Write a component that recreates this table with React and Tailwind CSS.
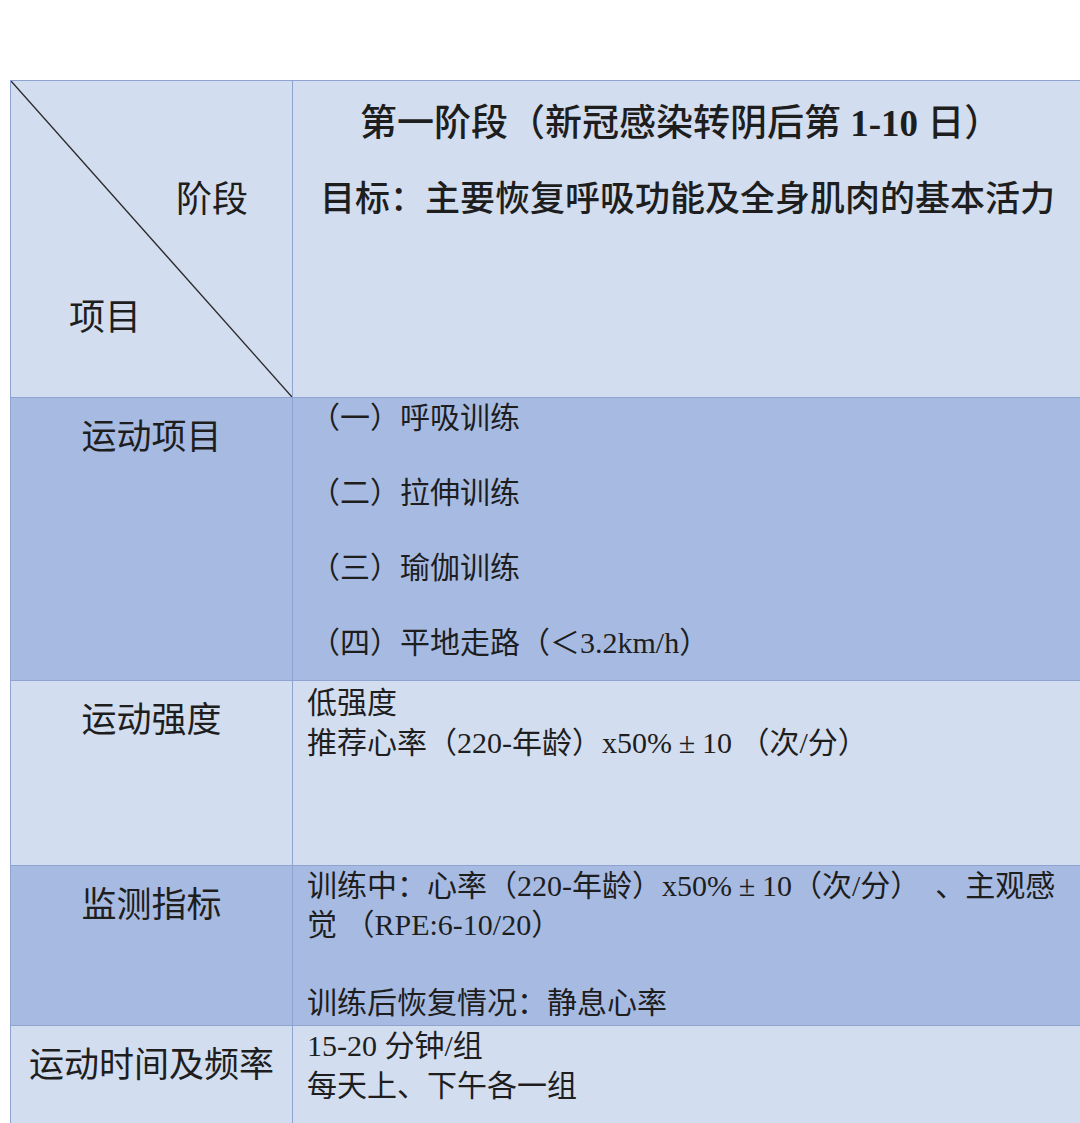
const FONT = { fontFamily: '"Liberation Serif", "Noto Sans CJK SC", serif' };

// wide ± like the CJK font in the original scan
const PM = () => <span className="inline-block w-[1em] text-center">±</span>;

const rows = [
  {
    label: "运动项目",
    dark: true,
    h: "h-[283px]",
    body: (
      <div className="pl-[17px] text-[30px] leading-[40px] flex flex-col gap-[35px]">
        <div>（一）呼吸训练</div>
        <div>（二）拉伸训练</div>
        <div>（三）瑜伽训练</div>
        <div>（四）平地走路（＜3.2km/h）</div>
      </div>
    ),
  },
  {
    label: "运动强度",
    dark: false,
    h: "h-[185px]",
    body: (
      <div className="pl-[14px] pt-[2px] text-[30px] leading-[40px] whitespace-pre">
        <div>低强度</div>
        <div>推荐心率（220-年龄）x50%<PM />10 （次/分）</div>
      </div>
    ),
  },
  {
    label: "监测指标",
    dark: true,
    h: "h-[160px]",
    body: (
      <div className="pl-[14px] text-[30px] leading-[39px] whitespace-pre">
        <div>训练中：心率（220-年龄）x50%<PM />10（次/分）  、主观感</div>
        <div>觉 （RPE:6-10/20）</div>
        <div className="h-[39px]" />
        <div>训练后恢复情况：静息心率</div>
      </div>
    ),
  },
  {
    label: "运动时间及频率",
    dark: false,
    h: "h-[120px]",
    body: (
      <div className="pl-[14px] text-[30px] leading-[40px]">
        <div>15-20 分钟/组</div>
        <div>每天上、下午各一组</div>
      </div>
    ),
  },
];

export default function App() {
  return (
    <div className="w-[1080px] h-[1123px] bg-white overflow-hidden pt-[80px] pl-[10px] text-[#1e1e1e]" style={FONT}>
      <div className="w-[1110px] border-l border-t border-[#8ea3cf]">
        {/* header */}
        <div className="flex h-[317px] bg-[#d2ddef] border-b border-[#8ea3cf]">
          <div className="relative w-[282px] shrink-0 border-r border-[#8ea3cf]">
            <svg className="absolute inset-0 w-full h-full" viewBox="0 0 100 100" preserveAspectRatio="none">
              <line x1="0" y1="0" x2="100" y2="100" stroke="#2a2a2a" strokeWidth="1.4" vectorEffect="non-scaling-stroke" />
            </svg>
            <div className="flex flex-col pt-[99px] text-[36px] leading-[40px]">
              <div className="pl-[165px]">阶段</div>
              <div className="pl-[58px] mt-[78px]">项目</div>
            </div>
          </div>
          <div className="flex-1 pt-[22px]">
            <div className="pl-[67px] text-[37px] leading-[42px] font-medium">
              第一阶段（新冠感染转阴后第 <span className="font-bold">1-10</span> 日）
            </div>
            <div className="pl-[27px] mt-[35px] text-[35px] leading-[40px] font-medium">
              目标：主要恢复呼吸功能及全身肌肉的基本活力
            </div>
          </div>
        </div>

        {rows.map((r) => (
          <div
            key={r.label}
            className={`flex ${r.h} border-b border-[#8ea3cf] ${r.dark ? "bg-[#a7bbe2]" : "bg-[#d2ddef]"}`}
          >
            <div className="w-[282px] shrink-0 border-r border-[#8ea3cf] pt-[20px] text-center text-[35px] leading-[40px]">
              {r.label}
            </div>
            <div className="flex-1">{r.body}</div>
          </div>
        ))}
      </div>
    </div>
  );
}
